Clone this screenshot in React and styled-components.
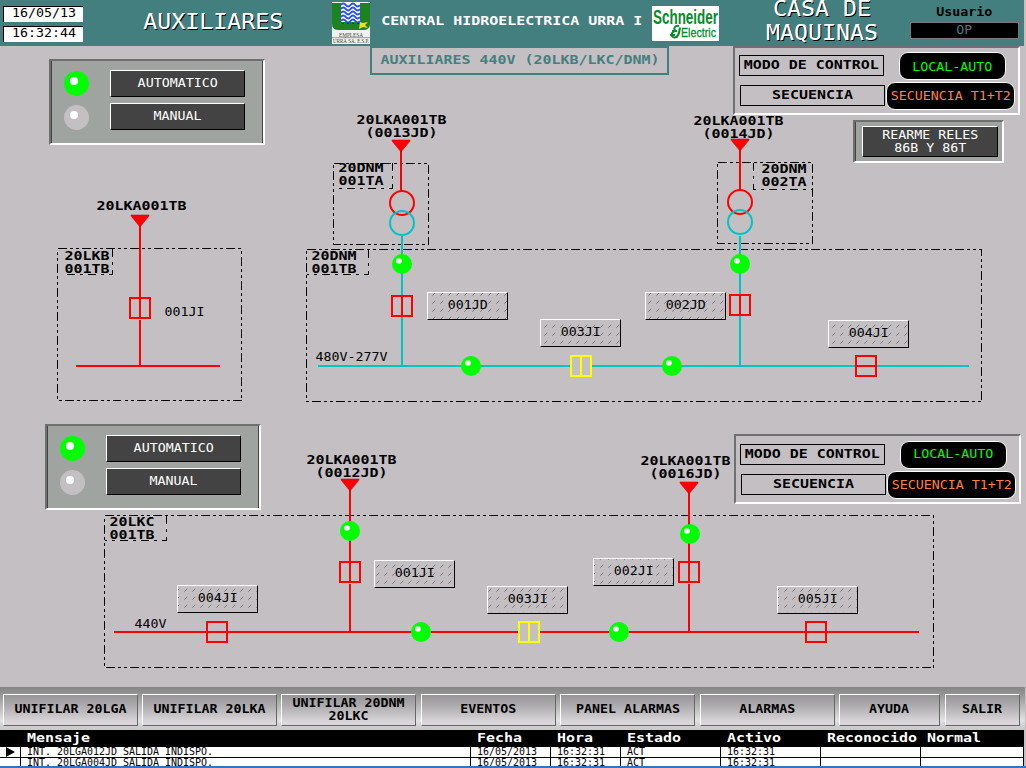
import React from "react";
import styled, { createGlobalStyle, css } from "styled-components";

const MONO = '"DejaVu Sans Mono", "Liberation Mono", monospace';
const GRAY = "#c4bfc3";
const TEAL = "#437f7f";
const RED = "#ff0000";
const CYAN = "#00c4c4";
const YELLOW = "#ffff00";
const GREEN = "#00ff00";

const GlobalStyle = createGlobalStyle`
  * { box-sizing: border-box; }
  body { margin: 0; background: ${GRAY}; font-family: ${MONO}; overflow: hidden; }
`;

const Screen = styled.div`
  width: 1026px;
  height: 768px;
  display: grid;
  grid-template-rows: 46px 641px 43px 38px;
  background: ${GRAY};
`;

/* Terminal text: $adv is the width of one character cell in pixels. */
const Text = styled.span`
  display: inline-block;
  flex: none;
  white-space: pre;
  text-align: center;
  font-family: ${MONO};
  font-size: ${(p) => p.$size || 13}px;
  font-weight: ${(p) => (p.$bold ? 700 : 400)};
  line-height: ${(p) => p.$line || 13}px;
  color: ${(p) => p.$color || "#000"};
  transform: scaleX(${(p) => (p.$adv || 8) / ((p.$size || 13) * 0.602)});
  transform-origin: ${(p) => (p.$left ? "left" : "center")} center;
  ${(p) => p.$shadow && css`text-shadow: 1px 1px 0 #000, 0.5px 0 0 #fff;`}
`;

/* ---------- header ---------- */
const Header = styled.header`
  width: 1024px;
  background: ${TEAL};
  display: grid;
  grid-template-columns: 80px 249px 38px 282px 67px 191px 109px;
  padding-left: 3px;
`;
const Clock = styled.div`
  display: flex;
  flex-direction: column;
  gap: 4px;
  padding-top: 6px;
`;
const ClockField = styled.div`
  height: 16px;
  background: #fff;
  border-top: 1px solid #000;
  border-left: 1px solid #000;
  display: flex;
  justify-content: center;
  align-items: center;
  padding-bottom: 2px;
`;
const HeaderTitle = styled.div`
  display: flex;
  height: 46px;
  align-items: center;
  justify-content: center;
  padding-left: ${(p) => p.$indent || 0}px;
  padding-bottom: ${(p) => p.$raise || 0}px;
`;
const LogoCell = styled.div`
  padding-top: ${(p) => p.$top}px;
  svg { display: block; overflow: visible; }
`;
const UserBox = styled.div`
  display: flex;
  flex-direction: column;
  align-items: center;
  padding-top: 6px;
`;
const UserName = styled.div`
  width: 109px;
  height: 17px;
  margin-top: 3px;
  background: #000;
  border: 1px solid #777;
  display: flex;
  justify-content: center;
  align-items: center;
`;

/* ---------- plant canvas ---------- */
const Canvas = styled.main`
  position: relative;
`;
const Mimic = styled.svg`
  position: absolute;
  inset: 0;
  display: block;
`;
const Placed = styled.div`
  position: absolute;
  left: ${(p) => p.$x}px;
  top: ${(p) => p.$y - 46}px;
`;
const Subtitle = styled.div`
  width: 299px;
  height: 29px;
  border: 2px solid ${TEAL};
  display: flex;
  align-items: center;
  justify-content: center;
  padding-bottom: 1px;
`;
const Frame = styled.div`
  border: 2px solid;
  border-color: #6f6f6f #fff #fff #6f6f6f;
`;
const ModePanel = styled(Frame)`
  width: 216px;
  height: 86px;
  background: #a0a4a0;
  box-shadow: inset 1px 0 #444, inset -1px 0 #444;
  padding: 9px 18px 0 12px;
  display: grid;
  grid-template-columns: 26px 135px;
  grid-auto-rows: 27px;
  row-gap: 6px;
  justify-content: space-between;
`;
const Lamp = styled.svg`
  display: block;
  width: 27px;
  height: 27px;
  margin-top: ${(p) => p.$drop || 0}px;
`;
const DarkButton = styled.button`
  width: ${(p) => p.$w || 135}px;
  height: ${(p) => p.$h || 27}px;
  margin: 0;
  padding: 0 0 2px;
  background: #434343;
  border: 1px solid;
  border-color: #fff #000 #000 #fff;
  display: flex;
  align-items: center;
  justify-content: center;
`;
const ControlPanel = styled(Frame)`
  width: 287px;
  height: ${(p) => p.$h}px;
  padding: ${(p) => p.$pad}px 0 0 4px;
  display: flex;
`;
const Names = styled.div`
  width: 147px;
  display: flex;
  flex-direction: column;
  gap: 9px;
  padding-top: 3px;
`;
const NameBox = styled.div`
  width: 145px;
  height: 21px;
  margin-left: ${(p) => p.$shift || 0}px;
  border: 1px solid #000;
  display: flex;
  align-items: center;
  justify-content: center;
  padding-bottom: 1px;
`;
const States = styled.div`
  display: flex;
  flex-direction: column;
  gap: 2px;
`;
const Pill = styled.div`
  width: ${(p) => p.$w}px;
  height: 28px;
  margin-left: ${(p) => p.$shift || 0}px;
  background: #000;
  border: 1px solid #fff;
  border-radius: 9px;
  display: flex;
  align-items: center;
  justify-content: center;
  padding-bottom: ${(p) => p.$raise || 0}px;
`;
const ResetPanel = styled(Frame)`
  width: 151px;
  height: 43px;
  background: #a0a4a0;
  box-shadow: inset 1px 0 #444;
  padding: 4px 0 0 7px;
`;
const Tag = styled.div`
  width: 81px;
  height: 28px;
  border: 1px solid;
  border-color: #fff #000 #000 #fff;
  display: flex;
  align-items: center;
  justify-content: center;
  padding-bottom: 3px;
`;

/* ---------- navigation ---------- */
const Nav = styled.nav`
  width: 1025px;
  padding: 7px 5px 4px 3px;
  display: grid;
  grid-template-columns: 135px 135px 136px 135px 136px 135px 102px 75px;
  column-gap: 4px;
  background: linear-gradient(#858585, #929292 15%, #e2e2e2 78%, #d0d0d0 90%, #c8c8c8);
`;
const NavButton = styled.button`
  width: ${(p) => p.$w}px;
  margin: 0;
  padding: 0 0 1px;
  border: 1px solid;
  border-color: #fff #666 #666 #fff;
  background: linear-gradient(#979597, #a9a7a9 30%, #dad6da 90%, #dad6da);
  display: flex;
  align-items: center;
  justify-content: center;
`;

/* ---------- alarm list ---------- */
const Alarms = styled.section`
  border-bottom: 2px solid #3a70c8;
  overflow: hidden;
`;
const AlarmRow = styled.div`
  width: 1024px;
  height: ${(p) => p.$h}px;
  display: grid;
  grid-template-columns: 21px 450px 80px 70px 100px 100px 100px 103px;
  background: ${(p) => (p.$head ? "#000" : "#fff")};
  border-bottom: ${(p) => (p.$line ? 1 : 0)}px solid #000;
`;
const Cell = styled.div`
  border-right: 1px solid #000;
  padding: ${(p) => p.$top || 0}px 0 0 6px;
  display: flex;
  align-items: flex-start;
`;

const EmpresaLogo = () => (
  <svg width="38" height="42" viewBox="0 0 38 42">
    <rect width="38" height="42" fill="#eef2ee" />
    <path d="M0 1H9V20H28V1H38V22Q38 28 31 28H7Q0 28 0 22Z" fill="#1b8420" />
    <rect x="9" y="1" width="19" height="19" fill="#fff" />
    {[3, 7, 11, 15, 19].map((y) => (
      <path key={y} d={`M9 ${y}q2.4 -3 4.75 0t4.75 0t4.75 0t4.75 0`} fill="none" stroke="#2650e8" strokeWidth="2" />
    ))}
    <path d="M10 21.500H27" stroke="#123e12" strokeDasharray="2 3" />
    <path d="M28 20l3 1 5-1-3 3 3 3-5-1-4 2z" fill="#f0e020" />
    <text x="7" y="34.500" fontFamily="Liberation Serif, serif" fontSize="5.500" fill="#444" textLength="24" lengthAdjust="spacingAndGlyphs">EMPLESA</text>
    <path d="M0 35.700H38" stroke="#777" strokeWidth=".7" />
    <text x="1" y="41" fontFamily="Liberation Serif, serif" fontSize="5.500" fill="#444" textLength="36" lengthAdjust="spacingAndGlyphs">URRÁ SA. E.S.P.</text>
  </svg>
);

const SchneiderLogo = () => (
  <svg width="67" height="35" viewBox="0 0 67 35">
    <rect width="67" height="35" fill="#fff" />
    <g fill="#0a8a2a" fontFamily="Liberation Sans, sans-serif">
      <text x="1" y="18" fontSize="19.500" fontWeight="700" textLength="65" lengthAdjust="spacingAndGlyphs">Schneider</text>
      <text x="29" y="30.500" fontSize="13" stroke="#0a8a2a" strokeWidth=".3" textLength="35" lengthAdjust="spacingAndGlyphs">Electric</text>
    </g>
    <path d="M27 20c-5-1-6 4-3 5c-5 0-6 7-1 6.500c3 0 4-3 5-10M20 25h5M18 29h5" fill="none" stroke="#0a8a2a" strokeWidth="2" />
  </svg>
);

/* ---------- diagram symbols ---------- */
const Wire = ({ d, c = RED }) => <path d={d} fill="none" stroke={c} strokeWidth="2" shapeRendering="crispEdges" />;
const Feeder = ({ x, y }) => <path d={`M${x - 9} ${y}H${x + 9}V${y + 1}L${x} ${y + 12}L${x - 9} ${y + 1}Z`} fill={RED} stroke="#c00000" strokeWidth=".5" />;
const Ball = ({ x, y }) => (
  <g>
    <circle cx={x} cy={y} r="10" fill={GREEN} />
    <circle cx={x - 3} cy={y - 3} r="2.800" fill="#fff" />
  </g>
);
const Breaker = ({ x, y, c = RED, flat }) => (
  <g shapeRendering="crispEdges">
    <rect x={x - 10} y={y - 10} width="20" height="20" fill={GRAY} stroke={c} strokeWidth="2" />
    <path d={flat ? `M${x - 10} ${y}H${x + 10}` : `M${x} ${y - 10}V${y + 10}`} stroke={c} strokeWidth="2" />
  </g>
);
const Winding = ({ x, y, c }) => <circle cx={x} cy={y} r="12" fill="none" stroke={c} strokeWidth="2" />;
const Zone = ({ x, y, w, h }) => (
  <path d={`M${x + 0.5} ${y + 0.5}H${x + w - 0.5}V${y + h - 0.5}H${x + 0.5}Z`} fill="none" stroke="#000" strokeDasharray="9 3 3 3 3 3" shapeRendering="crispEdges" />
);
const Corner = ({ d }) => <path d={d} fill="none" stroke="#000" strokeDasharray="8 5 3 5" shapeRendering="crispEdges" />;
const Label = ({ x, y, children, adv = 9, bold = true }) => (
  <text
    x={x} y={y} fontFamily={MONO} fontSize={bold ? 12 : 12.5} fontWeight={bold ? 700 : 400}
    textLength={children.length * adv} lengthAdjust="spacingAndGlyphs" fill="#000"
  >
    {children}
  </text>
);

const tags = [
  [427, 292, "001JD"], [540, 319, "003JI"], [645, 292, "002JD"], [828, 320, "004JI"],
  [177, 585, "004JI"], [374, 560, "001JI"], [487, 586, "003JI"], [593, 558, "002JI"], [777, 586, "005JI"],
];

const Diagram = () => (
  <Mimic width="1026" height="641" viewBox="0 46 1026 641">
    <defs>
      <pattern id="hatch" width="8" height="8" patternUnits="userSpaceOnUse">
        <path d="M0.300 7.700L3.300 4.700" stroke="#777" strokeWidth="1" />
      </pattern>
    </defs>
    {tags.map(([x, y]) => <rect key={`${x}-${y}`} x={x} y={y} width="81" height="28" fill="url(#hatch)" />)}

    <Zone x={57} y={248} w={185} h={153} />
    <Corner d="M112.500 249V274.500H63" />
    <Zone x={333} y={163} w={96} h={82} />
    <Corner d="M392.500 163V188.500H334" />
    <Zone x={717} y={162} w={96} h={82} />
    <Corner d="M753.500 163V189.500H812" />
    <Zone x={306} y={249} w={676} h={153} />
    <Corner d="M368.500 250V274.500H307" />
    <Zone x={104} y={515} w={830} h={153} />
    <Corner d="M166.500 516V540.500H105" />

    <Label x={96.5} y={210}>20LKA001TB</Label>
    <Label x={64.5} y={260}>20LKB</Label>
    <Label x={64.5} y={273}>001TB</Label>
    <Wire d="M140 216V298M140 320V366M76 366H220" />
    <Feeder x={140} y={215} />
    <Breaker x={140} y={308} />
    <Label x={164.5} y={316} adv={8} bold={false}>001JI</Label>

    <Label x={356.5} y={124}>20LKA001TB</Label>
    <Label x={365.5} y={137}>(0013JD)</Label>
    <Label x={338.5} y={172}>20DNM</Label>
    <Label x={338.5} y={185}>001TA</Label>
    <Wire d="M401 141V190" />
    <Feeder x={401} y={140} />
    <Wire d="M318 366H969M402 236V366M740 236V366" c={CYAN} />
    <Winding x={402} y={203} c={RED} />
    <Winding x={402} y={223} c={CYAN} />
    <Ball x={402} y={264} />
    <Breaker x={402} y={306} />
    <Label x={311.5} y={260}>20DNM</Label>
    <Label x={311.5} y={273}>001TB</Label>
    <Label x={315.5} y={361} adv={8} bold={false}>480V-277V</Label>
    <Ball x={471} y={366} />
    <Breaker x={581} y={366} c={YELLOW} />
    <Ball x={672} y={366} />
    <Breaker x={866} y={366} flat />

    <Label x={693.5} y={125}>20LKA001TB</Label>
    <Label x={702.5} y={138}>(0014JD)</Label>
    <Label x={761.5} y={173}>20DNM</Label>
    <Label x={761.5} y={186}>002TA</Label>
    <Wire d="M740 140V190" />
    <Feeder x={740} y={139} />
    <Winding x={740} y={202} c={RED} />
    <Winding x={740} y={222} c={CYAN} />
    <Ball x={740} y={264} />
    <Breaker x={740} y={305} />

    <Label x={306.5} y={464}>20LKA001TB</Label>
    <Label x={315.5} y={477}>(0012JD)</Label>
    <Label x={640.5} y={465}>20LKA001TB</Label>
    <Label x={649.5} y={478}>(0016JD)</Label>
    <Label x={109.5} y={526}>20LKC</Label>
    <Label x={109.5} y={539}>001TB</Label>
    <Label x={134.5} y={628} adv={8} bold={false}>440V</Label>
    <Wire d="M114 632H919M350 480V562M350 584V632M689 483V562M689 584V632" />
    <Feeder x={350} y={479} />
    <Feeder x={689} y={482} />
    <Ball x={350} y={531} />
    <Ball x={690} y={534} />
    <Breaker x={350} y={572} />
    <Breaker x={689} y={572} />
    <Breaker x={217} y={632} flat />
    <Ball x={421} y={632} />
    <Breaker x={529} y={632} c={YELLOW} />
    <Ball x={619} y={632} />
    <Breaker x={816} y={632} flat />
  </Mimic>
);

const ModeLamp = ({ on, drop }) => (
  <Lamp viewBox="0 0 27 27" $drop={drop}>
    <circle cx="13.500" cy="13.500" r="12.500" fill={on ? GREEN : GRAY} />
    <circle cx="11" cy="11" r="4" fill="#fff" />
  </Lamp>
);

const ModeSelector = () => (
  <ModePanel>
    <ModeLamp on />
    <DarkButton><Text $color="#fff" $size={12.5}>AUTOMATICO</Text></DarkButton>
    <ModeLamp drop={1} />
    <DarkButton><Text $color="#fff" $size={12.5}>MANUAL</Text></DarkButton>
  </ModePanel>
);

const Control = ({ height, pad, raise }) => (
  <ControlPanel $h={height} $pad={pad}>
    <Names>
      <NameBox><Text $bold $size={12} $adv={9}>MODO DE CONTROL</Text></NameBox>
      <NameBox $shift={1}><Text $bold $size={12} $adv={9}>SECUENCIA</Text></NameBox>
    </Names>
    <States>
      <Pill $w={107} $shift={13} $raise={raise}><Text $color={GREEN}>LOCAL-AUTO</Text></Pill>
      <Pill $w={129} $raise={1}><Text $color="#ff8040">SECUENCIA T1+T2</Text></Pill>
    </States>
  </ControlPanel>
);

const navItems = [
  ["UNIFILAR 20LGA", 135], ["UNIFILAR 20LKA", 135], ["UNIFILAR 20DNM\n20LKC", 135], ["EVENTOS", 135],
  ["PANEL ALARMAS", 135], ["ALARMAS", 135], ["AYUDA", 101], ["SALIR", 75],
];
const columns = ["", "Mensaje", "Fecha", "Hora", "Estado", "Activo", "Reconocido", "Normal"];
const alarms = [
  ["INT. 20LGA012JD SALIDA INDISPO.", "16/05/2013", "16:32:31", "ACT", "16:32:31", "", ""],
  ["INT. 20LGA004JD SALIDA INDISPO.", "16/05/2013", "16:32:31", "ACT", "16:32:31", "", ""],
];

export default function App() {
  return (
    <Screen>
      <GlobalStyle />
      <Header>
        <Clock>
          <ClockField><Text $size={12}>16/05/13</Text></ClockField>
          <ClockField><Text $size={12}>16:32:44</Text></ClockField>
        </Clock>
        <HeaderTitle $indent={11} $raise={3}>
          <Text $size={22} $adv={14} $line={24} $color="#fff" $shadow>AUXILIARES</Text>
        </HeaderTitle>
        <LogoCell $top={2}><EmpresaLogo /></LogoCell>
        <HeaderTitle $indent={1} $raise={4}>
          <Text $bold $size={12} $adv={9} $color="#fff">CENTRAL HIDROELECTRICA URRA I</Text>
        </HeaderTitle>
        <LogoCell $top={6}><SchneiderLogo /></LogoCell>
        <HeaderTitle $indent={14} $raise={5}>
          <Text $size={22} $adv={14} $line={24} $color="#fff" $shadow>{"CASA DE\nMAQUINAS"}</Text>
        </HeaderTitle>
        <UserBox>
          <Text $bold $size={12}>Usuario</Text>
          <UserName><Text $size={12} $color={TEAL}>OP</Text></UserName>
        </UserBox>
      </Header>

      <Canvas>
        <Diagram />
        <Placed $x={370} $y={46}>
          <Subtitle><Text $bold $size={12} $adv={9} $color={TEAL}>AUXILIARES 440V (20LKB/LKC/DNM)</Text></Subtitle>
        </Placed>
        <Placed $x={49} $y={59}><ModeSelector /></Placed>
        <Placed $x={45} $y={424}><ModeSelector /></Placed>
        <Placed $x={733} $y={46}><Control height={69} pad={4} raise={0} /></Placed>
        <Placed $x={734} $y={434}><Control height={70} pad={5} raise={4} /></Placed>
        <Placed $x={853} $y={120}>
          <ResetPanel>
            <DarkButton $w={136} $h={31}><Text $color="#fff" $size={12.5}>{"REARME RELES\n86B Y 86T"}</Text></DarkButton>
          </ResetPanel>
        </Placed>
        {tags.map(([x, y, name]) => (
          <Placed key={`${x}-${y}`} $x={x} $y={y}><Tag><Text $size={12.5}>{name}</Text></Tag></Placed>
        ))}
      </Canvas>

      <Nav>
        {navItems.map(([n, w]) => <NavButton key={n} $w={w}><Text $bold $size={12}>{n}</Text></NavButton>)}
      </Nav>

      <Alarms>
        <AlarmRow $head $h={17}>
          {columns.map((c, i) => <Cell key={i} $top={2}><Text $left $bold $size={12} $adv={9} $color="#fff">{c}</Text></Cell>)}
        </AlarmRow>
        {alarms.map((row, r) => (
          <AlarmRow key={r} $h={r === 0 ? 11 : 8} $line={r === 0}>
            <Cell>
              {r === 0 && <svg width="9" height="10" viewBox="0 0 9 10"><path d="M0 0L9 5L0 10Z" /></svg>}
            </Cell>
            {row.map((v, i) => <Cell key={i}><Text $left $size={9.8} $adv={6} $line={10}>{v}</Text></Cell>)}
          </AlarmRow>
        ))}
      </Alarms>
    </Screen>
  );
}
